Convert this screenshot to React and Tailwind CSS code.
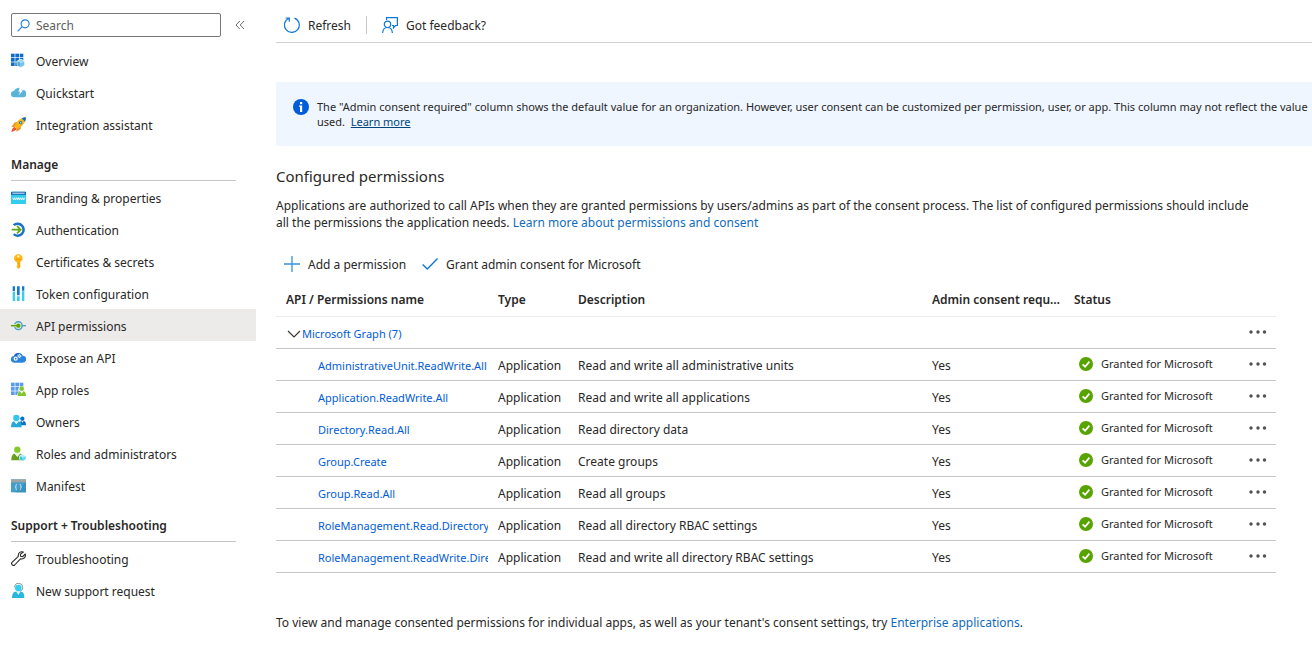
import React from "react";

const Icon = ({ children }) => (
  <svg viewBox="0 0 45 45" className="size-[15px] shrink-0" aria-hidden="true">
    {children}
  </svg>
);

const Grid = ({ color }) => (
  <g fill={color}>
    {[0, 13, 26].map((x) => [2, 15, 28].map((y) => <rect key={x + "-" + y} x={x} y={y} width="11" height="11" />))}
  </g>
);

const icons = {
  overview: (
    <Icon>
      <Grid color="#0f6fc6" />
      <path d="M29 17l13 7v13l-13 7-12-7V24z" fill="#fff" />
      <path d="M29 19l11 6-11 6-10-6z" fill="#9fd8f2" />
      <path d="M19 25l10 6v12l-10-6z" fill="#4fa9db" />
      <path d="M40 25l-11 6v12l11-6z" fill="#74c3e8" />
    </Icon>
  ),
  quickstart: (
    <Icon>
      <path d="M10 37a9.500 9.500 0 0 1-1-19A14 14 0 0 1 34 15a11 11 0 0 1 2 22z" fill="#59b4d9" />
      <path d="M27 6h8l-4 10h5L24 31l3-11h-5z" fill="#fff" />
    </Icon>
  ),
  rocket: (
    <Icon>
      <path d="M12 16l9-1-9 14-11 1zM30 24l-1 12-13 8 1-12z" fill="#f78d1e" />
      <path d="M10 29l7 7c-3 5-9 7-16 9 1-7 4-13 9-16z" fill="#e8562a" />
      <path d="M45 1c-1 14-9 27-27 35l-8-8C17 11 30 2 45 1z" fill="#fcb714" />
      <path d="M45 1c0 5-1 9-3 13L32 4c4-2 8-3 13-3z" fill="#0f6fc6" />
      <circle cx="29" cy="17" r="5" fill="#0f6fc6" />
      <circle cx="29" cy="17" r="2.500" fill="#9fd8f2" />
    </Icon>
  ),
  branding: (
    <Icon>
      <rect x="0" y="5" width="45" height="37" rx="2" fill="#32cdee" />
      <path d="M2 5h41a2 2 0 0 1 2 2v7H0V7a2 2 0 0 1 2-2z" fill="#0f5fae" />
      <rect x="4" y="8" width="37" height="3" fill="#e6f2fb" />
      <path d="M5 23l3 7 3-7 3 7 3-7M18 23l2 7 3-7 3 7 2-7M29 23l3 7 3-7 3 7 3-7" fill="none" stroke="#fff" strokeWidth="2.600" />
    </Icon>
  ),
  auth: (
    <Icon>
      <path d="M8 9.500a18 18 0 1 1 0 27" fill="none" stroke="#1a6fc9" strokeWidth="7.500" />
      <path d="M2 23h26M18 12l11 11-11 11" fill="none" stroke="#5fa815" strokeWidth="5.200" />
    </Icon>
  ),
  key: (
    <Icon>
      <path d="M22 1c8 0 13 5 13 12 0 5-3 9-7 11v15l-6 6-5-6v-3l3-3-3-3 2-3-2-2v-1c-5-2-8-6-8-11C9 6 14 1 22 1z" fill="#fdb913" />
      <circle cx="22" cy="7" r="3.500" fill="#fff3c4" />
      <path d="M14 16h16" stroke="#e8920c" strokeWidth="2.500" />
      <path d="M24 24v16" stroke="#e8920c" strokeWidth="2" />
    </Icon>
  ),
  token: (
    <Icon>
      <path d="M5 1h7v15H5zM18 1h8v27h-8zM33 1h7v13h-7z" fill="#1578cf" />
      <path d="M5 18h7v27H5zM18 31h8v14h-8zM33 16h7v29h-7z" fill="#37cdf0" />
    </Icon>
  ),
  api: (
    <Icon>
      <circle cx="22" cy="23" r="11.500" fill="none" stroke="#4a9fc4" strokeWidth="4.500" />
      <path d="M34 23h11" stroke="#4a9fc4" strokeWidth="4" />
      <path d="M6 23h12" stroke="#edebe9" strokeWidth="9" />
      <path d="M0 23h20" stroke="#5fa300" strokeWidth="4.500" />
      <circle cx="22" cy="23" r="6.500" fill="#5fa300" />
    </Icon>
  ),
  expose: (
    <Icon>
      <path d="M10 38a10 10 0 0 1-1-20A14 14 0 0 1 35 17a10.500 10.500 0 0 1 0 21z" fill="#2b83e2" />
      <path d="M9 18A14 14 0 0 1 35 17c-8 0-14 3-17 9z" fill="#1b6bc9" />
      <circle cx="14" cy="26" r="4.500" fill="none" stroke="#fff" strokeWidth="3.500" />
      <circle cx="25" cy="18" r="4.500" fill="#8fc3f7" stroke="#e2f0ff" strokeWidth="3.500" strokeDasharray="3 1.500" />
    </Icon>
  ),
  approles: (
    <Icon>
      <Grid color="#5a9bf0" />
      <path d="M18 45c0-9 3-15 6-17a9 9 0 1 1 14 0c4 2 7 8 7 17z" fill="#fff" />
      <circle cx="32" cy="20" r="7" fill="#7fc62a" />
      <path d="M20 42c0-9 3-14 7-14l5 7 5-7c5 0 8 5 8 14z" fill="#7fc62a" />
    </Icon>
  ),
  owners: (
    <Icon>
      <circle cx="34" cy="14" r="6.500" fill="#0f6fc6" />
      <path d="M25 34c0-8 3-13 6-13l3 5 4-5c5 0 7 5 7 13z" fill="#0f6fc6" />
      <circle cx="16" cy="12" r="9.500" fill="#35c5ea" />
      <path d="M0 40c0-12 4-18 9-18l7 9 7-9c6 0 9 6 9 18z" fill="#27a9d8" />
      <path d="M11 22h10l-5 8z" fill="#d5f4fc" />
    </Icon>
  ),
  roles: (
    <Icon>
      <circle cx="19" cy="11" r="9.500" fill="#86c92d" />
      <path d="M1 43c0-13 4-20 10-20l8 10 8-10c7 0 11 7 11 20z" fill="#659f1c" />
      <path d="M14 22h10l-5 9z" fill="#e4f5c9" />
      <path d="M34 24l11 6v10l-11 5-10-5V30z" fill="#fff" />
      <path d="M35 26l9 4-9 5-9-5z" fill="#a5ecfa" />
      <path d="M26 30l9 5v9l-9-4z" fill="#32bedd" />
      <path d="M44 30l-9 5v9l9-4z" fill="#5ed7f0" />
    </Icon>
  ),
  manifest: (
    <Icon>
      <rect x="0" y="4" width="45" height="39" fill="#459fc8" />
      <rect x="0" y="4" width="45" height="9" fill="#a2a4a6" />
      <path d="M45 13v30H12z" fill="#3a91bb" />
      <path d="M18 19c-3 0-3 2-3 4s0 4-3 4c3 0 3 2 3 4s0 5 3 5M26 19c3 0 3 2 3 4s0 4 3 4c-3 0-3 2-3 4s0 5-3 5" fill="none" stroke="#e3f2f8" strokeWidth="2.500" />
    </Icon>
  ),
  wrench: (
    <Icon>
      <path
        d="M37 3c-7-3-17 2-15 13L3 34c-4 5 3 12 8 8l18-19c9 3 16-4 14-14l-8 8-6-1-1-6z"
        fill="#fff"
        stroke="#252423"
        strokeWidth="3.200"
        strokeLinejoin="round"
      />
    </Icon>
  ),
  support: (
    <Icon>
      <path d="M11 13a11.500 11.500 0 0 1 24 0c0 6-2 10-8 12" fill="none" stroke="#7a7a7a" strokeWidth="2.500" />
      <circle cx="22" cy="15" r="10" fill="#32d0f0" />
      <path d="M3 45c0-12 4-19 10-19h18c6 0 9 7 9 19z" fill="#27b6df" />
      <path d="M16 26h12l-6 10z" fill="#e0f8fd" />
    </Icon>
  ),
};

const top = [
  ["overview", "Overview"],
  ["quickstart", "Quickstart"],
  ["rocket", "Integration assistant"],
];
const manage = [
  ["branding", "Branding & properties"],
  ["auth", "Authentication"],
  ["key", "Certificates & secrets"],
  ["token", "Token configuration"],
  ["api", "API permissions"],
  ["expose", "Expose an API"],
  ["approles", "App roles"],
  ["owners", "Owners"],
  ["roles", "Roles and administrators"],
  ["manifest", "Manifest"],
];
const support = [
  ["wrench", "Troubleshooting"],
  ["support", "New support request"],
];

const permissions = [
  ["AdministrativeUnit.ReadWrite.All", "Read and write all administrative units"],
  ["Application.ReadWrite.All", "Read and write all applications"],
  ["Directory.Read.All", "Read directory data"],
  ["Group.Create", "Create groups"],
  ["Group.Read.All", "Read all groups"],
  ["RoleManagement.Read.Directory", "Read all directory RBAC settings"],
  ["RoleManagement.ReadWrite.Directory", "Read and write all directory RBAC settings"],
];

function NavList({ items }) {
  return (
    <ul>
      {items.map(([icon, label]) => (
        <li key={label}>
          <a
            href="#"
            aria-current={icon === "api" ? "page" : undefined}
            className="flex h-8 items-center gap-[10px] pl-[11px] whitespace-nowrap aria-[current=page]:bg-[#edebe9]"
          >
            {icons[icon]}
            <span className="pt-1">{label}</span>
          </a>
        </li>
      ))}
    </ul>
  );
}

function NavHeading({ children }) {
  return (
    <h2 className="mr-5 ml-[11px] flex h-[41px] items-center border-b border-[#c8c6c4] pt-[10px] font-semibold">
      {children}
    </h2>
  );
}

function CommandButton({ label, children }) {
  return (
    <button type="button" className="flex items-center gap-2">
      {children}
      <span className="pt-[2px]">{label}</span>
    </button>
  );
}

function MoreButton({ label }) {
  return (
    <button type="button" aria-label={label} className="flex h-4 items-center">
      <svg viewBox="0 0 18 4" className="h-1 w-[18px]" fill="#505050">
        <circle cx="2" cy="2" r="1.700" />
        <circle cx="9" cy="2" r="1.700" />
        <circle cx="15.500" cy="2" r="1.700" />
      </svg>
    </button>
  );
}

const textCell = "h-8 border-b border-[#c8c6c4] pt-[2px] pl-[10px] whitespace-nowrap";
const iconCell = "h-8 border-b border-[#c8c6c4] pb-[2px] pl-[10px] whitespace-nowrap";
const head = "h-[37px] border-b border-[#edebe9] pt-1 pl-[10px] text-left font-semibold";

export default function App() {
  return (
    <div className="flex min-h-screen overflow-hidden bg-white font-['Noto_Sans','Open_Sans',sans-serif] text-[12px] leading-[18px] text-[#292827]">
      <nav className="w-64 shrink-0 pt-[13px]" aria-label="Application">
        <div className="mb-[7px] flex h-6 items-center gap-[14px] pl-[11px]">
          <label className="flex h-6 w-[210px] items-center gap-[6px] rounded-[2px] border border-[#7a7875] pl-[5px]">
            <svg viewBox="0 0 14 14" className="size-[13px] shrink-0" fill="none" stroke="#1f7fd4" strokeWidth="1.200" aria-hidden="true">
              <circle cx="8.700" cy="5.200" r="4.300" />
              <path d="M5.600 8.300L.6 13.300" />
            </svg>
            <input
              type="text"
              aria-label="Search"
              placeholder="Search"
              className="w-full min-w-0 bg-transparent pt-[2px] outline-none placeholder:text-[#605e5c]"
            />
          </label>
          <button type="button" aria-label="Collapse menu">
            <svg viewBox="0 0 10 10" className="size-[10px]" fill="none" stroke="#605e5c" strokeWidth="0.900">
              <path d="M4.800 1L1 5l3.800 4M9 1L5.200 5 9 9" />
            </svg>
          </button>
        </div>
        <NavList items={top} />
        <NavHeading>Manage</NavHeading>
        <NavList items={manage} />
        <NavHeading>Support + Troubleshooting</NavHeading>
        <NavList items={support} />
      </nav>

      <main className="ml-5 min-w-0 flex-1">
        <div className="flex h-[43px] items-center gap-[15px] border-b border-[#d2d0ce] pt-[7px] pl-2">
          <CommandButton label="Refresh">
            <svg viewBox="0 0 16 16" className="size-4" fill="none" stroke="#0f78d4" strokeWidth="1.200" aria-hidden="true">
              <path d="M10.500 1.100A7.400 7.400 0 1 1 5 1.200M1.600 1H5.300V4.700" />
            </svg>
          </CommandButton>
          <span className="h-[18px] w-px bg-[#c8c6c4]" />
          <CommandButton label="Got feedback?">
            <svg viewBox="0 0 16 16" className="size-4" fill="none" stroke="#0f78d4" strokeWidth="1.200" aria-hidden="true">
              <path d="M4.500 3V.6H15.400V8.500H13.500L11.500 10.700V8.500H10" />
              <circle cx="5.500" cy="7.300" r="3.200" />
              <path d="M.6 16C.8 12.500 2.800 10.500 5.500 10.500S10.200 12.500 10.400 16" />
            </svg>
          </CommandButton>
        </div>

        <div className="mt-[39px] flex h-16 gap-2 overflow-hidden rounded-l-[2px] bg-[#eff6ff] pt-[17px] pl-[17px] text-[11px] leading-[15px]">
          <svg viewBox="0 0 16 16" className="size-4 shrink-0" aria-hidden="true">
            <circle cx="8" cy="8" r="8" fill="#015cda" />
            <rect x="7" y="3" width="2.200" height="2.200" fill="#fff" />
            <path d="M6 6.500h3.200V13H7V7.700H6z" fill="#fff" />
          </svg>
          <p className="whitespace-nowrap">
            The "Admin consent required" column shows the default value for an organization. However, user consent can be customized per permission, user, or app. This column may not reflect the value
            <br />
            used.&nbsp;{" "}
            <a href="#" className="text-[#004578] underline">
              Learn more
            </a>
          </p>
        </div>

        <h1 className="mt-[18px] text-[15px] leading-6">Configured permissions</h1>
        <p className="mt-[9px] mr-12 leading-[17px]">
          Applications are authorized to call APIs when they are granted permissions by users/admins as part of the consent process. The list of configured permissions should include all the permissions the application needs.{" "}
          <a href="#" className="text-[#0f6cbd]">
            Learn more about permissions and consent
          </a>
        </p>

        <div className="mt-[17px] flex h-8 items-center gap-4 pl-2">
          <CommandButton label="Add a permission">
            <svg viewBox="0 0 16 16" className="size-4" stroke="#3a93dd" strokeWidth="1.300" aria-hidden="true">
              <path d="M8 0V16M0 8H16" />
            </svg>
          </CommandButton>
          <CommandButton label="Grant admin consent for Microsoft">
            <svg viewBox="0 0 16 16" className="size-4" fill="none" stroke="#0f78d4" strokeWidth="1.400" aria-hidden="true">
              <path d="M.6 8.500L5.300 13 15.500 2.500" />
            </svg>
          </CommandButton>
        </div>

        <div className="mr-9">
          <table className="w-full table-fixed border-separate border-spacing-0">
            <colgroup>
              <col className="w-[212px]" />
              <col className="w-20" />
              <col />
              <col className="w-[142px]" />
              <col className="w-[175px]" />
              <col className="w-[37px]" />
            </colgroup>
            <thead>
              <tr>
                <th className={head}>API / Permissions name</th>
                <th className={head}>Type</th>
                <th className={head}>Description</th>
                <th className={head}>
                  <div className="mr-px truncate">Admin consent required</div>
                </th>
                <th className={head}>Status</th>
                <td className={head} />
              </tr>
            </thead>
            <tbody>
              <tr>
                <td className={textCell} colSpan={5}>
                  <button type="button" className="flex items-center gap-px text-[11px] text-[#015cda]">
                    <svg viewBox="0 0 14 14" className="ml-px size-[14px]" fill="none" stroke="#323130" strokeWidth="1.100" aria-hidden="true">
                      <path d="M1 4l6 6 6-6" />
                    </svg>
                    Microsoft Graph (7)
                  </button>
                </td>
                <td className={iconCell}>
                  <MoreButton label="More actions for Microsoft Graph" />
                </td>
              </tr>
              {permissions.map(([name, description]) => (
                <tr key={name}>
                  <td className={textCell}>
                    <a href="#" className="ml-8 block overflow-hidden text-[11px] text-[#015cda]">
                      {name}
                    </a>
                  </td>
                  <td className={textCell}>Application</td>
                  <td className={textCell}>{description}</td>
                  <td className={textCell}>Yes</td>
                  <td className={iconCell}>
                    <div className="flex items-center gap-2 pl-[5px] text-[11px]">
                      <svg viewBox="0 0 14 14" className="size-[14px]" aria-hidden="true">
                        <circle cx="7" cy="7" r="7" fill="#57a300" />
                        <path d="M3.600 7.300L6.100 9.700 10.400 4.600" fill="none" stroke="#fff" strokeWidth="1.700" />
                      </svg>
                      Granted for Microsoft
                    </div>
                  </td>
                  <td className={iconCell}>
                    <MoreButton label={"More actions for " + name} />
                  </td>
                </tr>
              ))}
            </tbody>
          </table>
        </div>

        <p className="mt-[41px]">
          To view and manage consented permissions for individual apps, as well as your tenant's consent settings, try{" "}
          <a href="#" className="text-[#0f6cbd]">
            Enterprise applications
          </a>
          .
        </p>
      </main>
    </div>
  );
}
